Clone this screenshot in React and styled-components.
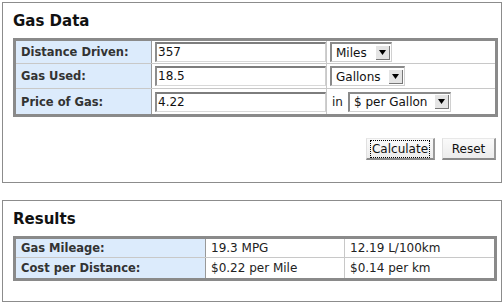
import React from "react";
import styled, { createGlobalStyle } from "styled-components";

const Global = createGlobalStyle`
  html, body { margin: 0; padding: 0; background: #fff; }
  body { font-family: "DejaVu Sans", Verdana, sans-serif; color: #222; }
`;

const Page = styled.div`
  padding: 2px 2px 0 2px;
  width: 500px;
  display: flex;
  flex-direction: column;
  gap: 17px;
`;

const Panel = styled.section`
  border: 1px solid #8c8c8c;
  padding: ${(p) => p.$pad};
  display: flex;
  flex-direction: column;
`;

const Heading = styled.h2`
  margin: 0 0 7px 0;
  font-size: 15px;
  line-height: 20px;
  font-weight: bold;
  color: #111;
`;

const Table = styled.table`
  border-collapse: collapse;
  width: 100%;
  border: 3px solid #8a8a8a;
  table-layout: fixed;
`;

const Row = styled.tr`
  height: ${(p) => p.$h}px;
`;

const Label = styled.td`
  background: #dcebfc;
  border: 1px solid #c8c8c8;
  border-right: 1px solid #999;
  padding: 0 0 0 5px;
  font-weight: bold;
  font-size: 11.5px;
  color: #333;
  white-space: nowrap;
  vertical-align: middle;
`;

const Cell = styled.td`
  border: 1px solid #c8c8c8;
  padding: 0 0 0 ${(p) => p.$pl ?? 3}px;
  font-size: 12px;
  color: #222;
  vertical-align: middle;
  white-space: nowrap;
`;

const Input = styled.div`
  box-sizing: border-box;
  width: 171px;
  height: 20px;
  border-top: 2px solid #7d7d7d;
  border-left: 2px solid #8d8d8d;
  border-right: 1px solid #cfcfcf;
  border-bottom: 1px solid #d8d8d8;
  background: #fff;
  font-size: 12px;
  line-height: 17px;
  padding-left: 1px;
  color: #111;
`;

const InlineRow = styled.div`
  display: flex;
  align-items: center;
  gap: 5px;
`;

const InWord = styled.span`
  font-size: 12px;
  color: #222;
`;

const Select = styled.div`
  box-sizing: border-box;
  width: ${(p) => p.$w}px;
  height: 20px;
  border-top: 2px solid #8a8a8a;
  border-left: 2px solid #8a8a8a;
  border-right: 1px solid #d0d0d0;
  border-bottom: 1px solid #d0d0d0;
  background: #fff;
  display: flex;
  align-items: center;
  justify-content: space-between;
  padding-left: 4px;
  font-size: 12px;
  color: #111;
`;

const Arrow = styled.span`
  width: 13px;
  height: 13px;
  margin-right: 1px;
  background: #e4e4e4;
  border-right: 1px solid #777;
  border-bottom: 1px solid #777;
  display: flex;
  align-items: center;
  justify-content: center;
`;

const Buttons = styled.div`
  display: flex;
  justify-content: flex-end;
  gap: 7px;
  margin: 21px 0 0 0;
  padding-right: 2px;
`;

const Button = styled.button`
  box-sizing: border-box;
  height: 22px;
  width: ${(p) => p.$w}px;
  font-family: "DejaVu Sans", Verdana, sans-serif;
  font-size: 12px;
  color: #111;
  background: linear-gradient(#fafafa, #ececec);
  border: none;
  border-right: 2px solid #9a9a9a;
  border-bottom: 2px solid #8a8a8a;
  border-top: 1px solid #e8e8e8;
  border-left: 1px solid #e0e0e0;
  padding: 0;
  display: flex;
  align-items: center;
  justify-content: center;
`;

const Focus = styled.span`
  outline: 1px dotted #000;
  padding: 0 1px;
  line-height: 16px;
`;

function DropArrow() {
  return (
    <Arrow>
      <svg width="7" height="5" viewBox="0 0 7 5">
        <path d="M0 0 H7 L3.5 5 Z" fill="#000" />
      </svg>
    </Arrow>
  );
}

function Dropdown({ w, children }) {
  return (
    <Select $w={w}>
      <span>{children}</span>
      <DropArrow />
    </Select>
  );
}

export default function App() {
  return (
    <>
      <Global />
      <Page>
        <Panel $pad="8px 3px 22px 10px">
          <Heading>Gas Data</Heading>
          <Table>
            <colgroup>
              <col style={{ width: "137px" }} />
              <col style={{ width: "175px" }} />
              <col />
            </colgroup>
            <tbody>
              <Row $h={24}>
                <Label>Distance Driven:</Label>
                <Cell><Input>357</Input></Cell>
                <Cell><Dropdown w={62}>Miles</Dropdown></Cell>
              </Row>
              <Row $h={25}>
                <Label>Gas Used:</Label>
                <Cell><Input>18.5</Input></Cell>
                <Cell><Dropdown w={75}>Gallons</Dropdown></Cell>
              </Row>
              <Row $h={27}>
                <Label>Price of Gas:</Label>
                <Cell><Input>4.22</Input></Cell>
                <Cell $pl={5}>
                  <InlineRow>
                    <InWord>in</InWord>
                    <Dropdown w={103}>$ per Gallon</Dropdown>
                  </InlineRow>
                </Cell>
              </Row>
            </tbody>
          </Table>
          <Buttons>
            <Button $w={69}><Focus>Calculate</Focus></Button>
            <Button $w={54}>Reset</Button>
          </Buttons>
        </Panel>
        <Panel $pad="8px 4px 20px 10px">
          <Heading>Results</Heading>
          <Table>
            <colgroup>
              <col style={{ width: "191px" }} />
              <col style={{ width: "139px" }} />
              <col />
            </colgroup>
            <tbody>
              <Row $h={20}>
                <Label>Gas Mileage:</Label>
                <Cell $pl={5}>19.3 MPG</Cell>
                <Cell $pl={5}>12.19 L/100km</Cell>
              </Row>
              <Row $h={22}>
                <Label>Cost per Distance:</Label>
                <Cell $pl={5}>$0.22 per Mile</Cell>
                <Cell $pl={5}>$0.14 per km</Cell>
              </Row>
            </tbody>
          </Table>
        </Panel>
      </Page>
    </>
  );
}
